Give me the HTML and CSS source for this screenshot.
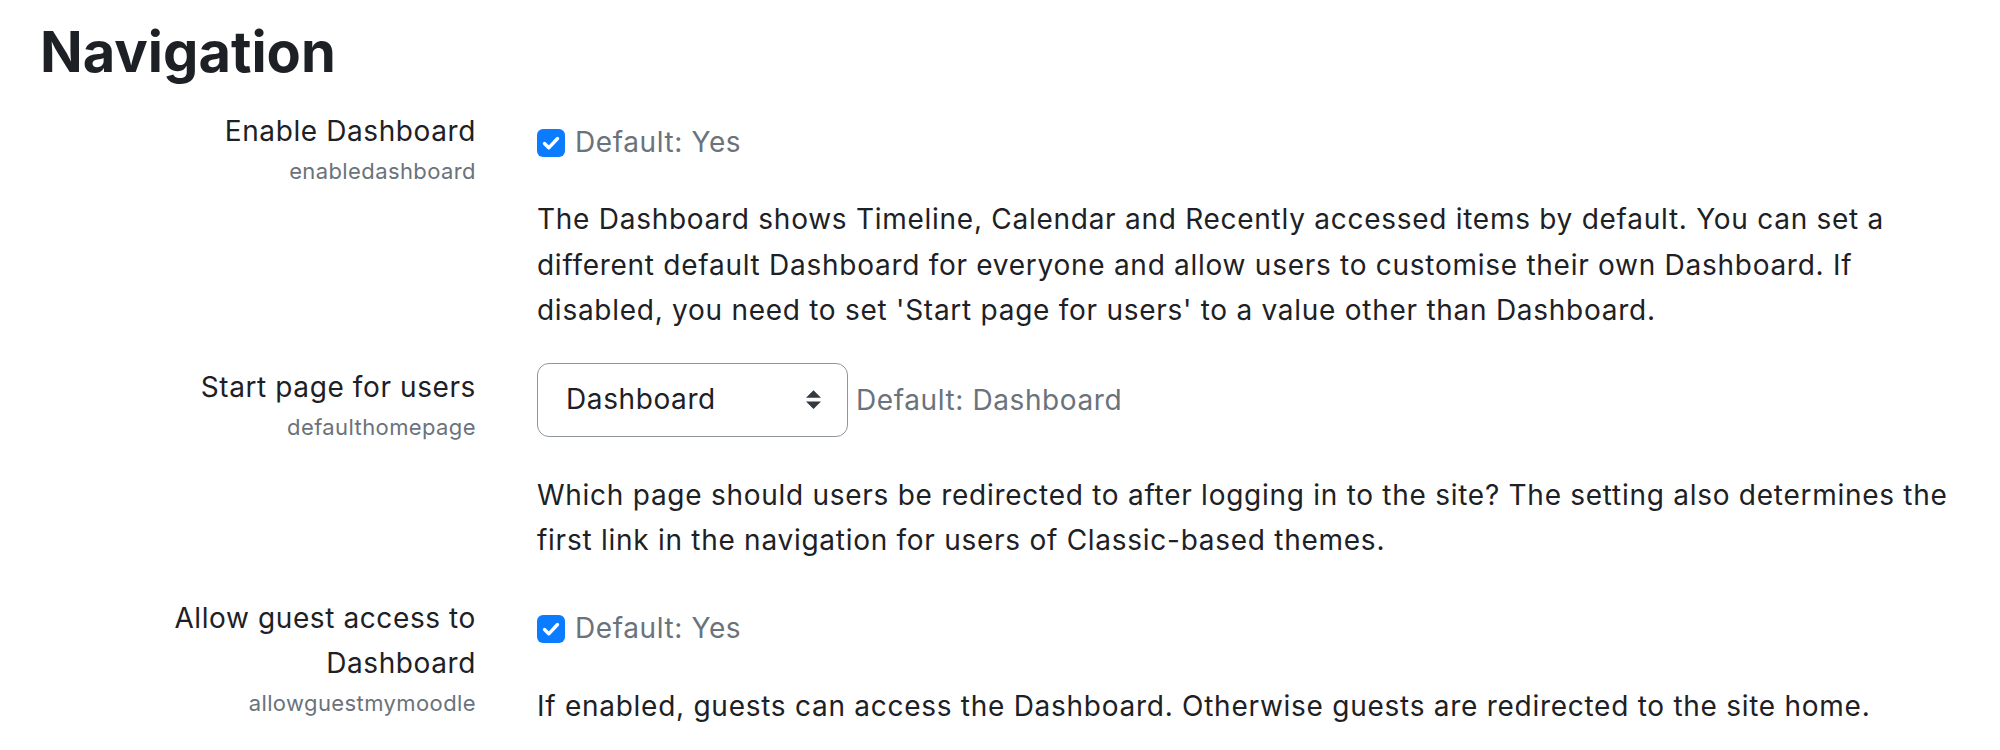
FILE: index.html
```html
<!DOCTYPE html>
<html lang="en">
<head>
<meta charset="utf-8">
<title>Navigation</title>
<link rel="stylesheet" href="styles.css">
</head>
<body>
<main class="page">
  <h2 class="heading">Navigation</h2>

  <div class="setting-row">
    <div class="setting-label">
      <label class="label-text">Enable Dashboard</label>
      <span class="shortname">enabledashboard</span>
    </div>
    <div class="setting-body">
      <div class="control-line checkbox-line">
        <span class="checkbox" role="checkbox" aria-checked="true">
          <svg viewBox="0 0 28 28" width="28" height="28"><path d="M7.5 14.5l4.3 4.3 8.7-9.3" fill="none" stroke="#fff" stroke-width="3.4" stroke-linecap="round" stroke-linejoin="round"/></svg>
        </span>
        <span class="default">Default: Yes</span>
      </div>
      <p class="description">The Dashboard shows Timeline, Calendar and Recently accessed items by default. You can set a different default Dashboard for everyone and allow users to customise their own Dashboard. If disabled, you need to set 'Start page for users' to a value other than Dashboard.</p>
    </div>
  </div>

  <div class="setting-row">
    <div class="setting-label">
      <label class="label-text">Start page for users</label>
      <span class="shortname">defaulthomepage</span>
    </div>
    <div class="setting-body">
      <div class="control-line select-line">
        <div class="select">
          <span class="select-value">Dashboard</span>
          <svg class="select-arrows" viewBox="0 0 4 5" width="15" height="19"><path d="M2 0L0 2h4zm0 5L0 3h4z" fill="#343a40"/></svg>
        </div>
        <span class="default">Default: Dashboard</span>
      </div>
      <p class="description">Which page should users be redirected to after logging in to the site? The setting also determines the first link in the navigation for users of Classic-based themes.</p>
    </div>
  </div>

  <div class="setting-row">
    <div class="setting-label">
      <label class="label-text">Allow guest access to Dashboard</label>
      <span class="shortname">allowguestmymoodle</span>
    </div>
    <div class="setting-body">
      <div class="control-line checkbox-line">
        <span class="checkbox" role="checkbox" aria-checked="true">
          <svg viewBox="0 0 28 28" width="28" height="28"><path d="M7.5 14.5l4.3 4.3 8.7-9.3" fill="none" stroke="#fff" stroke-width="3.4" stroke-linecap="round" stroke-linejoin="round"/></svg>
        </span>
        <span class="default">Default: Yes</span>
      </div>
      <p class="description">If enabled, guests can access the Dashboard. Otherwise guests are redirected to the site home.</p>
    </div>
  </div>
</main>
</body>
</html>
```

FILE: styles.css
```css
html, body {
  margin: 0;
  padding: 0;
  background: #fff;
}

body {
  font-family: Inter, "Liberation Sans", sans-serif;
  color: #1d2125;
  font-size: 28px;
  line-height: 45.5px;
  letter-spacing: 0.6px;
}

.page {
  padding: 19px 0 0 37px;
  width: 1962px;
  box-sizing: border-box;
}

.heading {
  margin: 0 0 23px 3px;
  font-size: 56px;
  font-weight: 700;
  line-height: 67px;
  letter-spacing: 0;
  color: #1d2125;
}

.setting-row {
  display: grid;
  grid-template-columns: 439px 1fr;
  column-gap: 61px;
  margin-bottom: 32px;
}

.setting-row:first-of-type {
  margin-bottom: 31px;
}

.setting-label {
  display: flex;
  flex-direction: column;
  align-items: flex-end;
  text-align: right;
  padding-left: 100px;
}

.label-text {
  font-size: 28px;
  line-height: 45px;
  color: #1d2125;
}

.shortname {
  font-size: 22px;
  line-height: 35px;
  letter-spacing: 0.4px;
  color: #6a737b;
}

.setting-body {
  display: flex;
  flex-direction: column;
}

.control-line {
  display: flex;
  align-items: center;
}

.checkbox-line {
  padding-top: 11px;
  height: 45px;
}

.checkbox {
  width: 28px;
  height: 28px;
  border-radius: 6px;
  background: #0b7cff;
  display: flex;
  align-items: center;
  justify-content: center;
  margin-right: 10px;
}

.checkbox svg {
  display: block;
}

.default {
  color: #6a737b;
  font-size: 28px;
}

.select {
  width: 311px;
  height: 74px;
  box-sizing: border-box;
  border: 1.5px solid #8f959e;
  border-radius: 12px;
  display: flex;
  align-items: center;
  justify-content: space-between;
  padding: 0 26px 0 28px;
  margin: -2px 8px 0 0;
  background: #fff;
}

.select-value {
  color: #1d2125;
}

.select-arrows {
  display: block;
}

.description {
  margin: 32px 0 0 0;
  letter-spacing: 0.73px;
}

.select-line + .description {
  margin-top: 36px;
}
```
